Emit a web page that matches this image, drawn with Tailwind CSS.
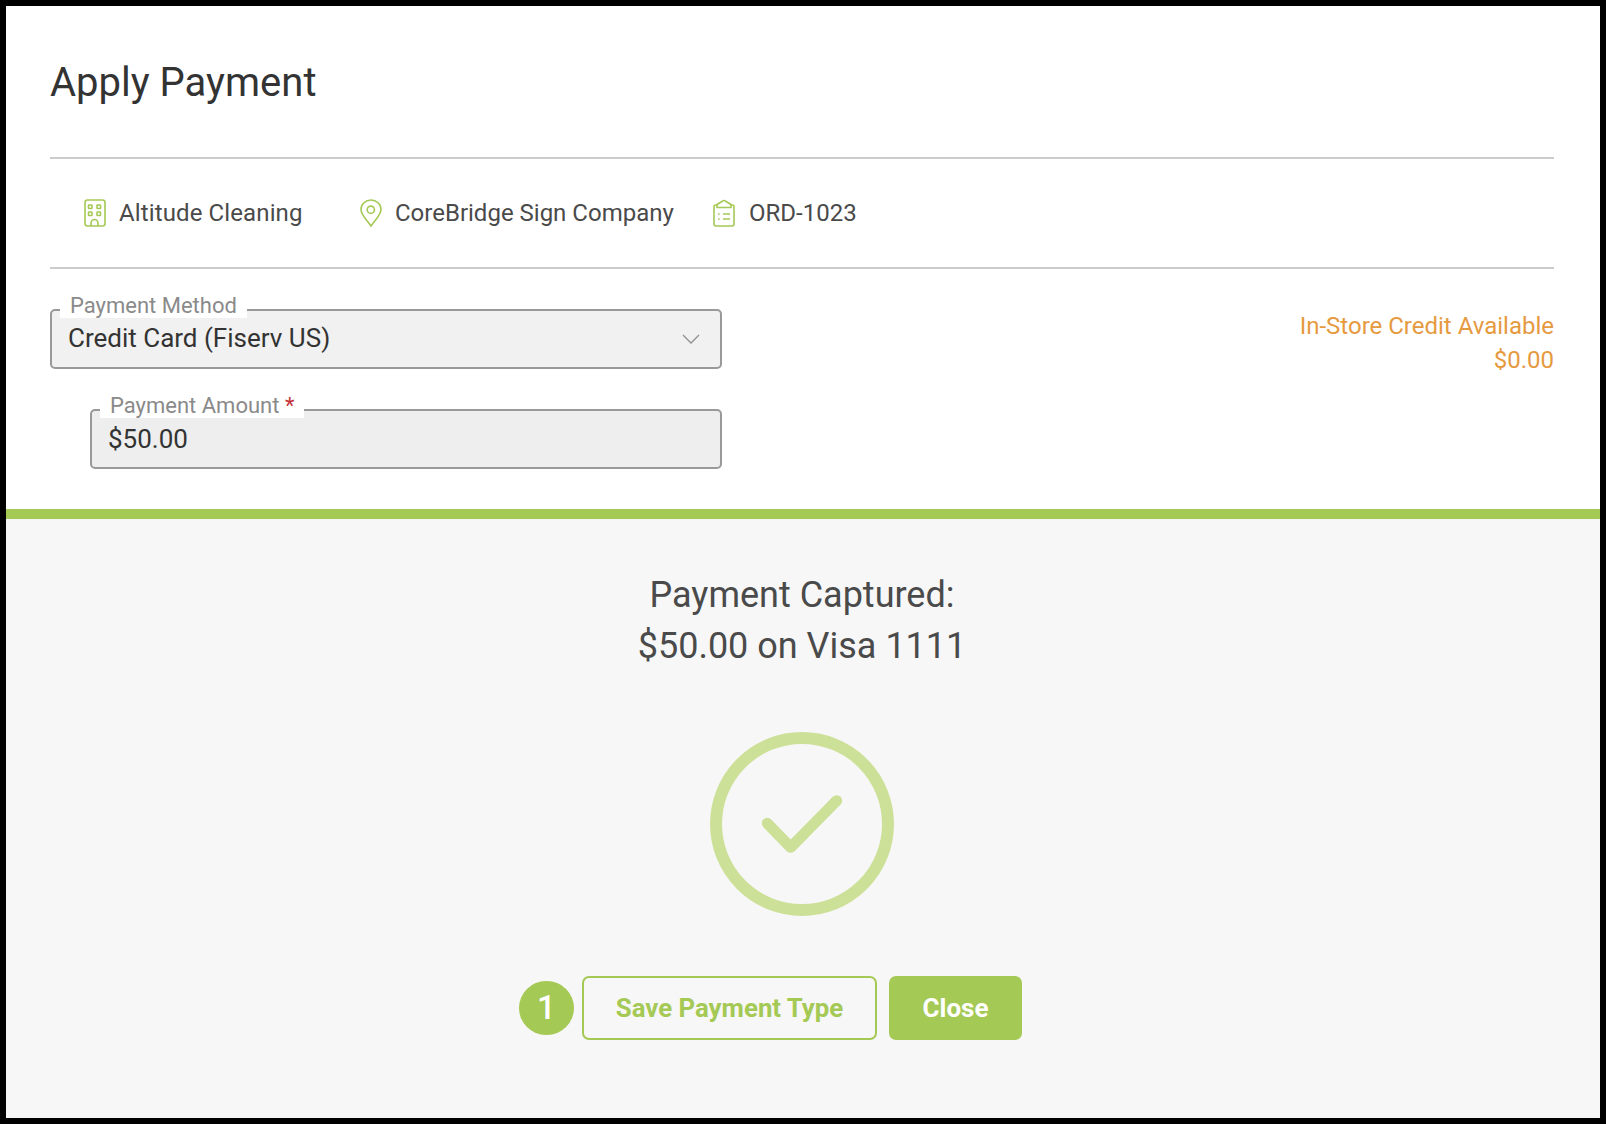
<!DOCTYPE html>
<html lang="en">
<head>
    <meta charset="UTF-8">
    <meta name="viewport" content="width=device-width, initial-scale=1.0">
    <title>Apply Payment</title>
    <script src="https://cdn.jsdelivr.net/npm/@tailwindcss/browser@4"></script>
</head>
<body class="bg-black">
    <div class="h-[1124px] w-[1606px] border-[6px] border-black bg-white font-['Roboto',sans-serif] flex flex-col">

        <!-- Top form -->
        <div class="h-[503px] pl-[44px] pr-[46px]">
            <h1 class="h-[153px] pt-[52px] text-[40px] leading-[50px] text-[#333333] border-b-2 border-[#cccccc]">Apply Payment</h1>

            <div class="h-[110px] flex items-center pl-[34px] text-[24px] text-[#4a4a4a] border-b-2 border-[#cccccc]">
                <svg class="w-[22px] h-[28px] text-[#a5c955]" viewBox="0 0 22 28" fill="none" stroke="currentColor" stroke-width="1.6">
                    <rect x="1" y="1" width="20" height="26" rx="2.5"/>
                    <rect x="4.500" y="6" width="3.500" height="3.500" rx=".6"/>
                    <rect x="13" y="6" width="3.500" height="3.500" rx=".6"/>
                    <rect x="4.500" y="13" width="3.500" height="3.500" rx=".6"/>
                    <rect x="13" y="13" width="3.500" height="3.500" rx=".6"/>
                    <path d="M7 27v-3a3.500 3.500 0 0 1 7 0v3"/>
                </svg>
                <span class="ml-[13px] w-[241px] tracking-[0.12px]">Altitude Cleaning</span>
                <svg class="w-[22px] h-[28px] text-[#a5c955]" viewBox="0 0 22 28" fill="none" stroke="currentColor" stroke-width="1.6">
                    <path d="M11 27C7 21 1 16 1 10.500A10 9.500 0 0 1 21 10.500C21 16 15 21 11 27Z"/>
                    <circle cx="10.800" cy="10.700" r="3.600"/>
                </svg>
                <span class="ml-[13px] w-[318px]">CoreBridge Sign Company</span>
                <svg class="w-[22px] h-[28px] text-[#a5c955]" viewBox="0 0 22 28" fill="none" stroke="currentColor" stroke-width="1.6" stroke-linejoin="round">
                    <path d="M4 6H3a2 2 0 0 0-2 2v17a2 2 0 0 0 2 2h16a2 2 0 0 0 2-2V8a2 2 0 0 0-2-2h-1"/>
                    <path d="M4 8.500V5.500L9 2.500Q11 0.500 13 2.500L18 5.500V8.500Z"/>
                    <path d="M10 15h7M10 20h7M5 15h1.600M5 20h1.600"/>
                </svg>
                <span class="ml-[14px]">ORD-1023</span>
            </div>

            <div class="flex justify-between pt-[40px]">
                <div class="w-[672px]">
                    <div class="relative h-[60px] rounded-[5px] border-2 border-[#999999] bg-[#f1f1f1] flex items-center justify-between pl-[16px] pr-[20px]">
                        <span class="absolute left-[8px] -top-[17px] bg-white px-[10px] h-[24px] text-[22px] leading-[24px] text-[#8a8a8a] whitespace-nowrap">Payment Method</span>
                        <span class="text-[26px] leading-[36px] -mt-[2px] text-[#333333]">Credit Card (Fiserv US)</span>
                        <svg class="w-[18px] h-[12px]" viewBox="0 0 18 12" fill="none" stroke="#8f8f8f" stroke-width="1.300"><path d="M1 2l8 8 8-8"/></svg>
                    </div>
                    <div class="relative ml-[40px] mt-[40px] h-[60px] rounded-[5px] border-2 border-[#999999] bg-[#eeeeee] flex items-center pl-[16px]">
                        <span class="absolute left-[8px] -top-[17px] bg-white px-[10px] h-[24px] text-[22px] leading-[24px] text-[#8a8a8a] whitespace-nowrap">Payment Amount <span class="text-[#c4333a]">*</span></span>
                        <span class="text-[26px] text-[#333333]">$50.00</span>
                    </div>
                </div>
                <div class="text-right text-[24px] leading-[34px] text-[#e69a3f]">
                    <div>In-Store Credit Available</div>
                    <div>$0.00</div>
                </div>
            </div>
        </div>

        <!-- Result -->
        <div class="flex-1 bg-[#f7f7f7] border-t-[10px] border-[#a5c955] flex flex-col items-center pt-[51px]">
            <p class="text-[36px] leading-[51px] -translate-x-px text-[#4a4a4a] text-center">Payment Captured:<br>$50.00 on Visa 1111</p>
            <svg class="mt-[60px] w-[184px] h-[184px] -translate-x-px" viewBox="0 0 184 184" fill="none" stroke="#cde097" stroke-linecap="round" stroke-linejoin="round">
                <circle cx="92" cy="92" r="86" stroke-width="12"/>
                <path d="M57.300 91.300L80.700 115.300L126.700 68.700" stroke-width="11"/>
            </svg>
            <div class="relative mt-[60px] flex items-center -translate-x-px">
                <span class="absolute -left-[63px] top-[5px] w-[55px] h-[54px] rounded-full bg-[#a5c955] text-white text-[33px] font-medium flex items-center justify-center">1</span>
                <button class="w-[295px] h-[64px] rounded-[7px] border-2 border-[#a5c955] text-[#a5c955] text-[25.800px] font-bold">Save Payment Type</button>
                <button class="ml-[12px] w-[133px] h-[64px] rounded-[7px] bg-[#a5c955] text-white text-[26px] font-bold">Close</button>
            </div>
        </div>
    </div>
</body>
</html>
